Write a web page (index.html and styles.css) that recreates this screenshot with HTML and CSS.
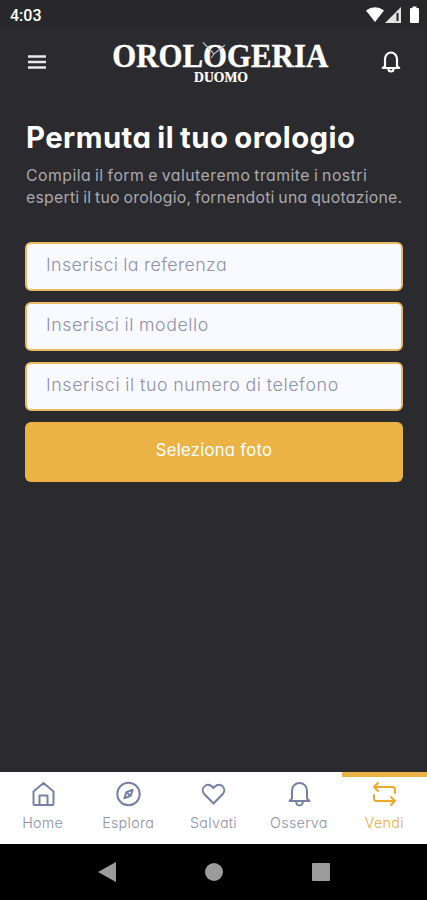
FILE: index.html
```html
<!DOCTYPE html>
<html lang="it">
<head>
<meta charset="utf-8">
<meta name="viewport" content="width=device-width, initial-scale=1">
<title>Orologeria Duomo</title>
<link rel="stylesheet" href="styles.css">
</head>
<body>
<div class="status">
  <span class="clock">4:03</span>
  <svg class="status-icons" width="54" height="18" viewBox="0 0 54 18" fill="#fff">
    <path d="M0 4.400Q9 -2 18 4.400L9 16Z"/>
    <path d="M35 1V17H19Z" fill="#e2e2e2"/><path d="M31.500 7v8" stroke="#28282a" stroke-width="2"/>
    <path d="M45 2h1.500V.5h4V2H52q1 0 1 1v13q0 1-1 1h-7q-1 0-1-1V3q0-1 1-1z"/>
  </svg>
</div>
<header class="header">
  <svg class="menu" width="18" height="14" viewBox="0 0 18 14" stroke="#e9e9eb" stroke-width="2.600"><path d="M0 1.500h18M0 7h18M0 12.500h18"/></svg>
  <svg class="logo" width="218" height="46" viewBox="0 0 218 46" fill="#fff">
    <text class="brand" x="1.200" y="29" textLength="216" lengthAdjust="spacingAndGlyphs">OROLOGERIA</text>
    <text class="sub" x="83" y="43.500" textLength="54" lengthAdjust="spacingAndGlyphs">DUOMO</text>
    <path d="M92 4.500l11 11.500 11-9M103 16l-3 4" fill="none" stroke="#bdbdbf" stroke-width="1.200"/>
  </svg>
  <svg class="alert" width="20" height="22" viewBox="0 0 20 22" fill="none" stroke="#fff" stroke-width="2.200" stroke-linejoin="round" stroke-linecap="round"><path d="M4 15.500V8a6 6.500 0 0 1 12 0v7.500l2.200 1.500H1.800zM7.500 18q0 2.500 2.500 2.500t2.500-2.500"/></svg>
</header>
<main class="content">
  <h1 class="title">Permuta il tuo orologio</h1>
  <p class="intro"><span class="line-one">Compila il form e valuteremo tramite i nostri</span><br><span class="line-two">esperti il tuo orologio, fornendoti una quotazione.</span></p>
  <div class="form">
    <div class="field">Inserisci la referenza</div>
    <div class="field model">Inserisci il modello</div>
    <div class="field phone">Inserisci il tuo numero di telefono</div>
    <div class="button">Seleziona foto</div>
  </div>
</main>
<nav class="tabs">
  <div class="tab"><svg width="26" height="26" viewBox="0 0 26 26"><path d="M3 23V10.500L13 2l10 8.500V23q0 1-1 1H4q-1 0-1-1zM9 24V14.500h8V24"/></svg><span>Home</span></div>
  <div class="tab"><svg width="26" height="26" viewBox="0 0 26 26"><circle cx="13" cy="13" r="11.200"/><path d="M17.200 8.800l-2 6-6.400 2.400 2-6zM11.500 11.500l3 3"/></svg><span>Esplora</span></div>
  <div class="tab"><svg width="26" height="26" viewBox="0 0 26 26"><path d="M13 22.500L3.700 13C-1 7.800 6.500 .4 11.500 5.500L13 7l1.500-1.500C19.500 .4 27 7.800 22.300 13z"/></svg><span>Salvati</span></div>
  <div class="tab"><svg width="26" height="26" viewBox="0 0 26 26"><path d="M5.500 17.500V9.500a7.500 7.500 0 0 1 15 0v8l2.500 2.500H3zM9.500 20.500Q10 24.500 13 24.500t3.500-4"/></svg><span>Osserva</span></div>
  <div class="tab active"><svg width="26" height="26" viewBox="0 0 26 26"><path d="M6.500 2L2.500 6l4 4M2.500 6H21q2.500 0 2.500 2.500V12M19.500 16l4 4-4 4M23.500 20H5q-2.500 0-2.500-2.500V14"/></svg><span>Vendi</span></div>
</nav>
<div class="system">
  <svg width="18" height="20" viewBox="0 0 18 20"><path d="M18 0v20L0 10z"/></svg>
  <svg width="18" height="18" viewBox="0 0 18 18"><circle cx="9" cy="9" r="9"/></svg>
  <svg width="18" height="18" viewBox="0 0 18 18"><rect width="18" height="18" rx="1"/></svg>
</div>
</body>
</html>
```
FILE: styles.css
```css
* { box-sizing: border-box; }
body {
  margin: 0;
  height: 900px;
  display: flex;
  flex-direction: column;
  overflow: hidden;
  background: #2b2a2f;
  color: #fff;
  font-family: Inter, "Open Sans", sans-serif;
  font-feature-settings: "cv11" 1;
}
span { white-space: nowrap; }
svg { display: block; flex: none; }
.status {
  height: 29px;
  padding: 6px 7px 0 10px;
  display: flex;
  justify-content: space-between;
  background: #28282a;
}
.clock { font: 500 16px/19px Roboto, sans-serif; }
.header {
  height: 67px;
  padding: 9px 26px 0 28px;
  display: flex;
  align-items: flex-start;
}
.menu { margin-top: 17px; }
.logo { margin: 0 0 0 65px; overflow: visible; font-family: "Liberation Serif", serif; font-weight: 700; }
.brand { font-size: 34px; stroke: #fff; stroke-width: .4px; }
.sub { font-size: 14px; stroke: #fff; stroke-width: .2px; }
.alert { margin: 13px 0 0 auto; }
.content { flex: 1; padding: 22px 24px 0 25px; }
.title { margin: 0; padding-left: 1px; font-size: 29.3px; line-height: 40px; font-weight: 650; letter-spacing: .46px; word-spacing: -1.5px; white-space: nowrap; }
.intro { margin: 7px 0 0 1px; font-size: 15.8px; line-height: 22px; color: #aaa9ad; }
.line-one { letter-spacing: .47px; word-spacing: -1px; }
.line-two { letter-spacing: .26px; word-spacing: -1px; }
.form { display: grid; gap: 11px; margin-top: 33px; }
.field {
  height: 49px;
  padding: 0 19px;
  border: 2px solid #e9bb63;
  border-radius: 6px;
  background: #f9faff;
  color: #8d91ab;
  font-size: 17.8px;
  font-weight: 330;
  line-height: 42px;
  letter-spacing: .42px;
  word-spacing: -.5px;
}
.model { letter-spacing: .55px; }
.phone { letter-spacing: .62px; }
.button {
  height: 60px;
  border-radius: 6px;
  background: #ebb345;
  text-align: center;
  font-size: 16.6px;
  line-height: 56px;
  letter-spacing: .3px;
}
.tabs { height: 72px; display: grid; grid-template-columns: repeat(5, 1fr); background: #fff; color: #8b90ab; }
.tab { display: flex; flex-direction: column; align-items: center; padding-top: 9px; font-size: 14.3px; line-height: 20px; border-top: 0 solid #ebb345; }
.tab svg { fill: none; stroke: #7780a5; stroke-width: 2; stroke-linecap: round; stroke-linejoin: round; transform: translateX(.5px); }
.tab span { margin-top: 6px; font-weight: 300; letter-spacing: .3px; }
.active { padding-top: 4px; border-top-width: 5px; color: #eba93f; }
.tab.active svg { stroke: #eba92d; }
.system { height: 56px; background: #000; fill: #9c9c9c; display: flex; justify-content: center; align-items: center; gap: 89px; }
```
